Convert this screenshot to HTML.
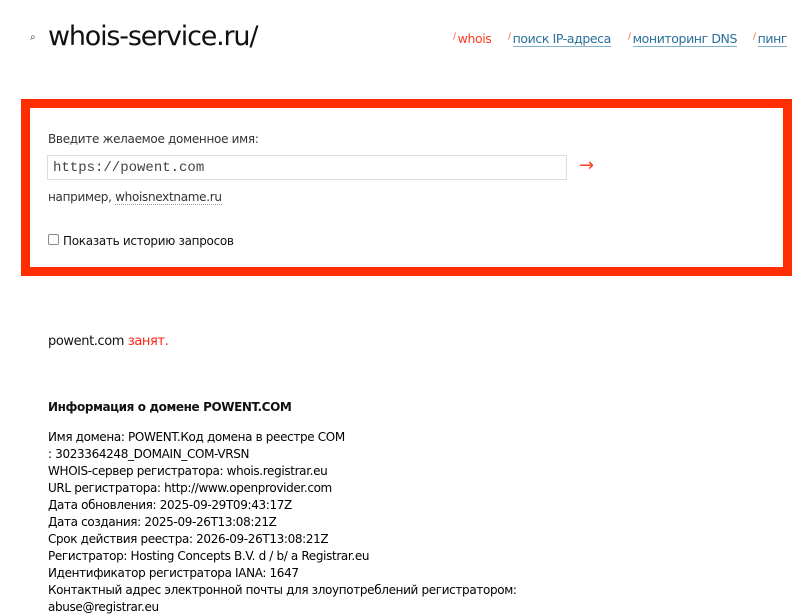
<!DOCTYPE html>
<html><head><meta charset="utf-8"><style>
body{margin:0;width:798px;height:616px;overflow:hidden;background:#fff;font-family:"DejaVu Sans","Liberation Sans",sans-serif;color:#111;position:relative}
.a{position:absolute;white-space:nowrap}
.logo{left:48px;top:21px;font-size:27px;letter-spacing:-1.2px;color:#111}
.nav{top:31px;font-size:12.5px;letter-spacing:-0.4px}
.nav a{color:#2a6f9b;text-decoration:none;border-bottom:1px solid #7fb0cc}
.nav i{color:#ff5533;font-style:normal;font-size:9px;vertical-align:4px;margin-right:2px}
.box{left:21px;top:99px;width:753px;height:159px;border:9px solid #ff2e00}
.s{font-size:12px;letter-spacing:-0.3px}
.inp{left:47px;top:155px;width:520px;height:25px;border:1px solid #ddd;font-family:"Liberation Mono",monospace;font-size:14px;line-height:24px;padding-left:5px;box-sizing:border-box;color:#444}
.info{left:48px;top:429px;font-size:12px;line-height:17px;letter-spacing:-0.35px;color:#000}
</style></head><body>
<div class="a" style="left:30px;top:32px;font-size:10px;color:#333">⌕</div>
<div class="a logo">whois-service.ru/</div>
<div class="a nav" style="left:453px"><i>/</i><span style="color:#ff3b1f">whois</span></div>
<div class="a nav" style="left:508px"><i>/</i><a>поиск IP-адреса</a></div>
<div class="a nav" style="left:628px"><i>/</i><a>мониторинг DNS</a></div>
<div class="a nav" style="left:753px"><i>/</i><a>пинг</a></div>
<div class="a box"></div>
<div class="a s" style="left:48px;top:132px;color:#333">Введите желаемое доменное имя:</div>
<div class="a inp">https://powent.com</div>
<div class="a" style="left:579px;top:155px;font-size:18px;color:#ff4422">→</div>
<div class="a s" style="left:48px;top:190px;color:#333">например, <span style="border-bottom:1px dotted #999">whoisnextname.ru</span></div>
<div class="a" style="left:48px;top:234px;width:9px;height:9px;border:1px solid #888;border-radius:2px"></div>
<div class="a s" style="left:63px;top:234px">Показать историю запросов</div>
<div class="a" style="left:48px;top:334px;font-size:13px;letter-spacing:-0.4px">powent.com <span style="color:#f21">занят.</span></div>
<div class="a" style="left:48px;top:400px;font-size:12px;font-weight:bold;letter-spacing:-0.4px">Информация о домене POWENT.COM</div>
<div class="a info">Имя домена: POWENT.Код домена в реестре COM<br>: 3023364248_DOMAIN_COM-VRSN<br>WHOIS-сервер регистратора: whois.registrar.eu<br>URL регистратора: http://www.openprovider.com<br>Дата обновления: 2025-09-29T09:43:17Z<br>Дата создания: 2025-09-26T13:08:21Z<br>Срок действия реестра: 2026-09-26T13:08:21Z<br>Регистратор: Hosting Concepts B.V. d / b/ a Registrar.eu<br>Идентификатор регистратора IANA: 1647<br>Контактный адрес электронной почты для злоупотреблений регистратором:<br>abuse@registrar.eu</div>
</body></html>
